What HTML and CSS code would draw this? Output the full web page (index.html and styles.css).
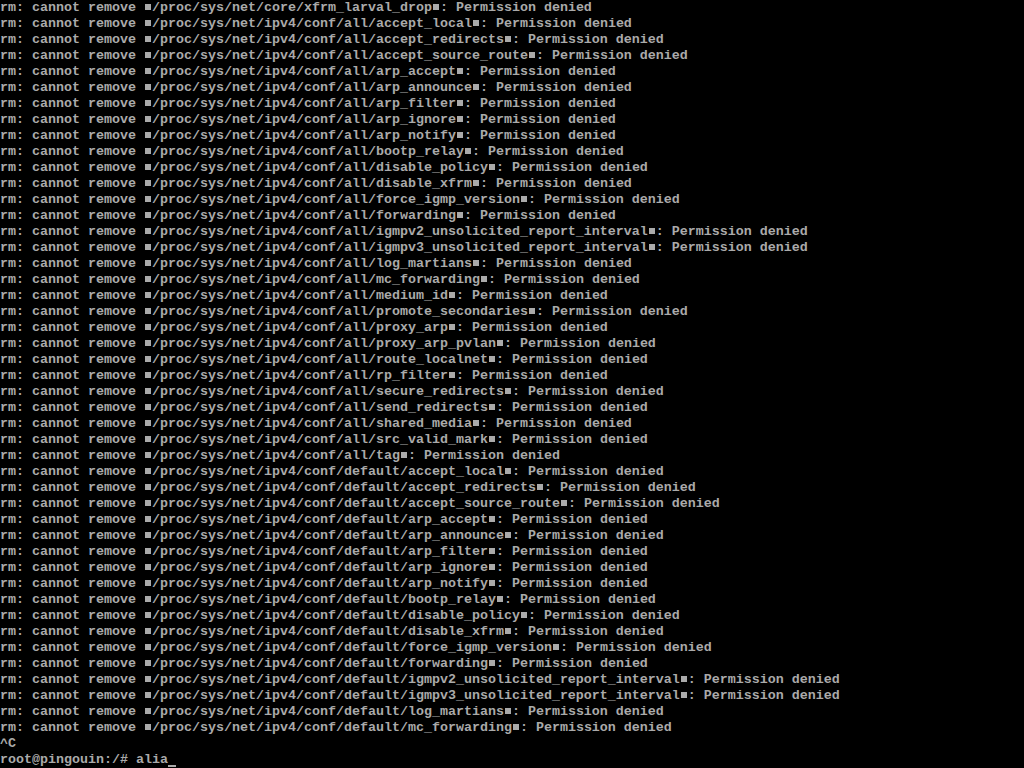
FILE: index.html
```html
<!DOCTYPE html>
<html>
    <head>
        <title>tty1</title>
        <meta charset="utf-8" />
        <link rel="stylesheet" href="styles.css">
    </head>
    <body>
<pre class="console">rm: cannot remove <span class="q"></span>/proc/sys/net/core/xfrm_larval_drop<span class="q"></span>: Permission denied
rm: cannot remove <span class="q"></span>/proc/sys/net/ipv4/conf/all/accept_local<span class="q"></span>: Permission denied
rm: cannot remove <span class="q"></span>/proc/sys/net/ipv4/conf/all/accept_redirects<span class="q"></span>: Permission denied
rm: cannot remove <span class="q"></span>/proc/sys/net/ipv4/conf/all/accept_source_route<span class="q"></span>: Permission denied
rm: cannot remove <span class="q"></span>/proc/sys/net/ipv4/conf/all/arp_accept<span class="q"></span>: Permission denied
rm: cannot remove <span class="q"></span>/proc/sys/net/ipv4/conf/all/arp_announce<span class="q"></span>: Permission denied
rm: cannot remove <span class="q"></span>/proc/sys/net/ipv4/conf/all/arp_filter<span class="q"></span>: Permission denied
rm: cannot remove <span class="q"></span>/proc/sys/net/ipv4/conf/all/arp_ignore<span class="q"></span>: Permission denied
rm: cannot remove <span class="q"></span>/proc/sys/net/ipv4/conf/all/arp_notify<span class="q"></span>: Permission denied
rm: cannot remove <span class="q"></span>/proc/sys/net/ipv4/conf/all/bootp_relay<span class="q"></span>: Permission denied
rm: cannot remove <span class="q"></span>/proc/sys/net/ipv4/conf/all/disable_policy<span class="q"></span>: Permission denied
rm: cannot remove <span class="q"></span>/proc/sys/net/ipv4/conf/all/disable_xfrm<span class="q"></span>: Permission denied
rm: cannot remove <span class="q"></span>/proc/sys/net/ipv4/conf/all/force_igmp_version<span class="q"></span>: Permission denied
rm: cannot remove <span class="q"></span>/proc/sys/net/ipv4/conf/all/forwarding<span class="q"></span>: Permission denied
rm: cannot remove <span class="q"></span>/proc/sys/net/ipv4/conf/all/igmpv2_unsolicited_report_interval<span class="q"></span>: Permission denied
rm: cannot remove <span class="q"></span>/proc/sys/net/ipv4/conf/all/igmpv3_unsolicited_report_interval<span class="q"></span>: Permission denied
rm: cannot remove <span class="q"></span>/proc/sys/net/ipv4/conf/all/log_martians<span class="q"></span>: Permission denied
rm: cannot remove <span class="q"></span>/proc/sys/net/ipv4/conf/all/mc_forwarding<span class="q"></span>: Permission denied
rm: cannot remove <span class="q"></span>/proc/sys/net/ipv4/conf/all/medium_id<span class="q"></span>: Permission denied
rm: cannot remove <span class="q"></span>/proc/sys/net/ipv4/conf/all/promote_secondaries<span class="q"></span>: Permission denied
rm: cannot remove <span class="q"></span>/proc/sys/net/ipv4/conf/all/proxy_arp<span class="q"></span>: Permission denied
rm: cannot remove <span class="q"></span>/proc/sys/net/ipv4/conf/all/proxy_arp_pvlan<span class="q"></span>: Permission denied
rm: cannot remove <span class="q"></span>/proc/sys/net/ipv4/conf/all/route_localnet<span class="q"></span>: Permission denied
rm: cannot remove <span class="q"></span>/proc/sys/net/ipv4/conf/all/rp_filter<span class="q"></span>: Permission denied
rm: cannot remove <span class="q"></span>/proc/sys/net/ipv4/conf/all/secure_redirects<span class="q"></span>: Permission denied
rm: cannot remove <span class="q"></span>/proc/sys/net/ipv4/conf/all/send_redirects<span class="q"></span>: Permission denied
rm: cannot remove <span class="q"></span>/proc/sys/net/ipv4/conf/all/shared_media<span class="q"></span>: Permission denied
rm: cannot remove <span class="q"></span>/proc/sys/net/ipv4/conf/all/src_valid_mark<span class="q"></span>: Permission denied
rm: cannot remove <span class="q"></span>/proc/sys/net/ipv4/conf/all/tag<span class="q"></span>: Permission denied
rm: cannot remove <span class="q"></span>/proc/sys/net/ipv4/conf/default/accept_local<span class="q"></span>: Permission denied
rm: cannot remove <span class="q"></span>/proc/sys/net/ipv4/conf/default/accept_redirects<span class="q"></span>: Permission denied
rm: cannot remove <span class="q"></span>/proc/sys/net/ipv4/conf/default/accept_source_route<span class="q"></span>: Permission denied
rm: cannot remove <span class="q"></span>/proc/sys/net/ipv4/conf/default/arp_accept<span class="q"></span>: Permission denied
rm: cannot remove <span class="q"></span>/proc/sys/net/ipv4/conf/default/arp_announce<span class="q"></span>: Permission denied
rm: cannot remove <span class="q"></span>/proc/sys/net/ipv4/conf/default/arp_filter<span class="q"></span>: Permission denied
rm: cannot remove <span class="q"></span>/proc/sys/net/ipv4/conf/default/arp_ignore<span class="q"></span>: Permission denied
rm: cannot remove <span class="q"></span>/proc/sys/net/ipv4/conf/default/arp_notify<span class="q"></span>: Permission denied
rm: cannot remove <span class="q"></span>/proc/sys/net/ipv4/conf/default/bootp_relay<span class="q"></span>: Permission denied
rm: cannot remove <span class="q"></span>/proc/sys/net/ipv4/conf/default/disable_policy<span class="q"></span>: Permission denied
rm: cannot remove <span class="q"></span>/proc/sys/net/ipv4/conf/default/disable_xfrm<span class="q"></span>: Permission denied
rm: cannot remove <span class="q"></span>/proc/sys/net/ipv4/conf/default/force_igmp_version<span class="q"></span>: Permission denied
rm: cannot remove <span class="q"></span>/proc/sys/net/ipv4/conf/default/forwarding<span class="q"></span>: Permission denied
rm: cannot remove <span class="q"></span>/proc/sys/net/ipv4/conf/default/igmpv2_unsolicited_report_interval<span class="q"></span>: Permission denied
rm: cannot remove <span class="q"></span>/proc/sys/net/ipv4/conf/default/igmpv3_unsolicited_report_interval<span class="q"></span>: Permission denied
rm: cannot remove <span class="q"></span>/proc/sys/net/ipv4/conf/default/log_martians<span class="q"></span>: Permission denied
rm: cannot remove <span class="q"></span>/proc/sys/net/ipv4/conf/default/mc_forwarding<span class="q"></span>: Permission denied
^C
root@pingouin:/# alia<span class="cursor"></span></pre>
    </body>
</html>
```

FILE: styles.css
```css
html {
    background: #000000;
}
body {
    margin: 0;
    background: #000000;
    overflow: hidden;
}
.console {
    margin: 0;
    color: #aaaaaa;
    font-family: "Liberation Mono", "DejaVu Sans Mono", monospace;
    font-size: 13.3333px;
    font-weight: bold;
    line-height: 16px;
    white-space: pre;
}
.q {
    display: inline-block;
    width: 8px;
    height: 16px;
    vertical-align: top;
    position: relative;
}
.q::after {
    content: "";
    position: absolute;
    left: 1px;
    top: 4px;
    width: 6px;
    height: 6px;
    background: #aaaaaa;
}
.cursor {
    display: inline-block;
    width: 8px;
    height: 16px;
    vertical-align: top;
    position: relative;
}
.cursor::after {
    content: "";
    position: absolute;
    left: 0;
    bottom: 1px;
    width: 8px;
    height: 2px;
    background: #aaaaaa;
}
```
